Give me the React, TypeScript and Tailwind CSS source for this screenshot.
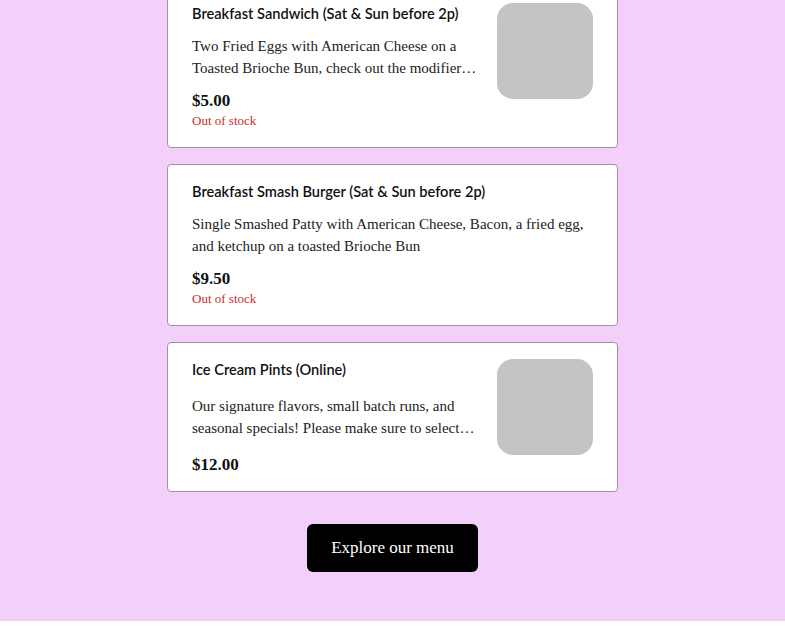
import React from "react";

type Item = {
  title: string;
  desc: string;
  price: string;
  oos: boolean;
  image: boolean;
  tall?: boolean;
};

const items: Item[] = [
  {
    title: "Breakfast Sandwich (Sat & Sun before 2p)",
    desc: "Two Fried Eggs with American Cheese on a Toasted Brioche Bun, check out the modifiers for extra toppings and sides to add on.",
    price: "$5.00",
    oos: true,
    image: true,
  },
  {
    title: "Breakfast Smash Burger (Sat & Sun before 2p)",
    desc: "Single Smashed Patty with American Cheese, Bacon, a fried egg, and ketchup on a toasted Brioche Bun",
    price: "$9.50",
    oos: true,
    image: false,
  },
  {
    title: "Ice Cream Pints (Online)",
    desc: "Our signature flavors, small batch runs, and seasonal specials! Please make sure to select your flavors before checkout.",
    price: "$12.00",
    oos: false,
    image: true,
    tall: true,
  },
];

const serif = { fontFamily: '"Liberation Serif", "DejaVu Serif", serif' };
const sans = { fontFamily: 'Lato, "Open Sans", sans-serif' };

function Card({ item }: { item: Item }) {
  return (
    <div
      className={`w-[451px] rounded-[4px] border border-[#a48fab] bg-white pl-6 pr-6 pt-[16px] ${
        item.oos ? "pb-[17px]" : "pb-[15px]"
      } flex gap-4`}
    >
      <div className="flex-1 min-w-0">
        <div className="pt-[2px] text-[14.6px] leading-[18px] font-semibold text-[#111]" style={sans}>
          {item.title}
        </div>
        <div
          className={`${item.tall ? "mt-[16px]" : "mt-[12px]"} text-[15px] leading-[22px] text-[#222] line-clamp-2`}
          style={serif}
        >
          {item.desc}
        </div>
        <div
          className={`${item.tall ? "mt-[15px]" : "mt-[11px]"} text-[17px] leading-[22px] font-bold text-[#111]`}
          style={serif}
        >
          {item.price}
        </div>
        {item.oos && (
          <div className="text-[13px] leading-[18px] text-[#c62f2f]" style={serif}>
            Out of stock
          </div>
        )}
      </div>
      {item.image && (
        <div className="w-24 h-24 shrink-0 rounded-2xl bg-[#c4c4c4]" />
      )}
    </div>
  );
}

export default function App() {
  return (
    <div className="w-[785px] bg-white">
      <div className="bg-[#f2d0f9] h-[621px] overflow-hidden flex flex-col items-center">
        <div className="-mt-[14px] flex flex-col gap-4">
          {items.map((it) => (
            <Card key={it.title} item={it} />
          ))}
        </div>
        <button
          className="mt-8 h-12 px-6 rounded-md bg-black text-white text-[17px]"
          style={serif}
        >
          Explore our menu
        </button>
      </div>
      <div className="h-2 bg-white" />
    </div>
  );
}
